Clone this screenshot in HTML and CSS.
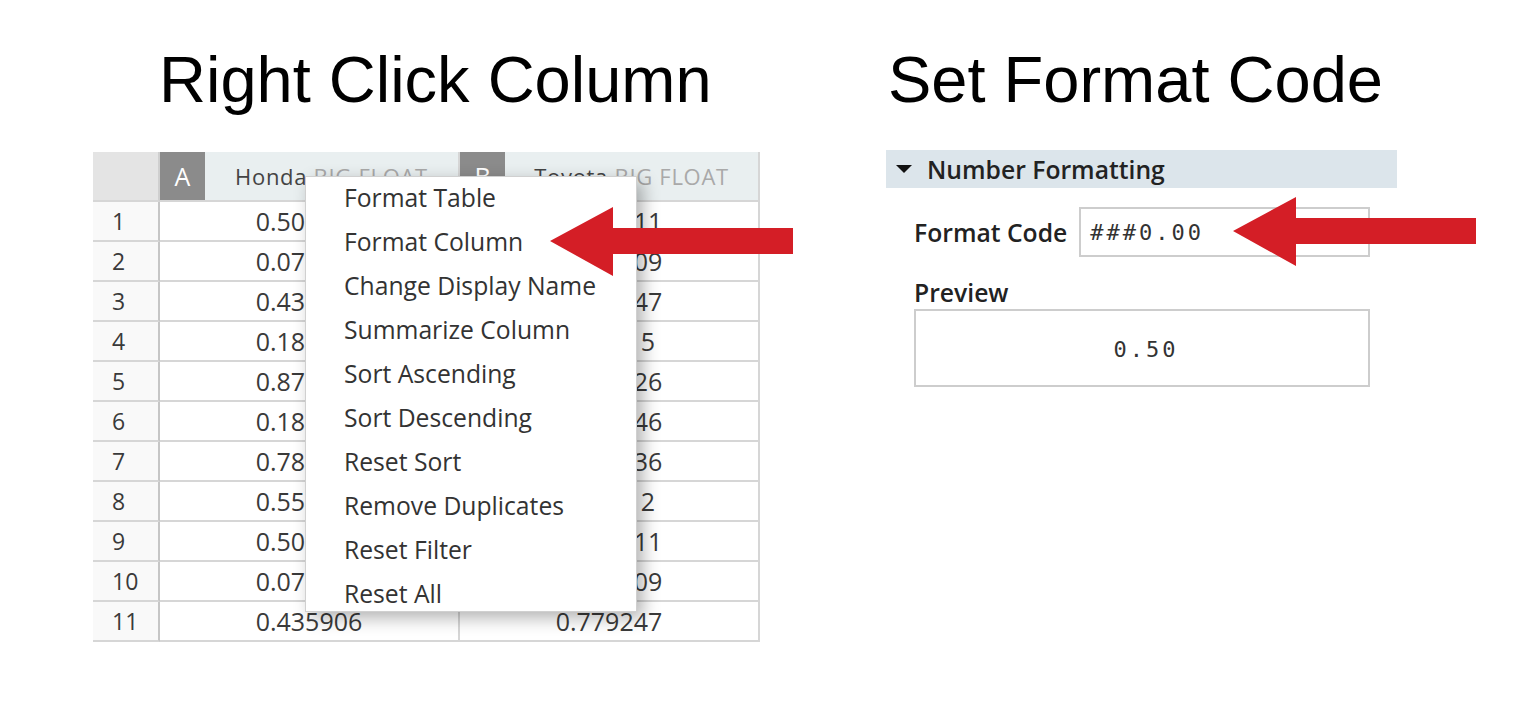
FILE: index.html
```html
<!DOCTYPE html>
<html lang="en">
<head>
<meta charset="utf-8">
<title>Right Click Column / Set Format Code</title>
<link rel="stylesheet" href="styles.css">
</head>
<body>
<main class="page">
  <section class="left">
    <h1 class="title">Right Click Column</h1>
    <div class="sheet">
      <div class="grid">
        <div class="cell corner"></div>
        <div class="cell colh"><span class="badge">A</span><span class="colname">Honda <span class="type">BIG FLOAT</span></span></div>
        <div class="cell colh"><span class="badge">B</span><span class="colname">Toyota <span class="type">BIG FLOAT</span></span></div>

        <div class="cell rn">1</div><div class="cell val">0.501623</div><div class="cell val">0.322411</div>
        <div class="cell rn">2</div><div class="cell val">0.071482</div><div class="cell val">0.916509</div>
        <div class="cell rn">3</div><div class="cell val">0.435906</div><div class="cell val">0.779247</div>
        <div class="cell rn">4</div><div class="cell val">0.183750</div><div class="cell val">0.84315</div>
        <div class="cell rn">5</div><div class="cell val">0.872214</div><div class="cell val">0.290826</div>
        <div class="cell rn">6</div><div class="cell val">0.186329</div><div class="cell val">0.512346</div>
        <div class="cell rn">7</div><div class="cell val">0.784015</div><div class="cell val">0.847436</div>
        <div class="cell rn">8</div><div class="cell val">0.553908</div><div class="cell val">0.39612</div>
        <div class="cell rn">9</div><div class="cell val">0.501623</div><div class="cell val">0.322411</div>
        <div class="cell rn">10</div><div class="cell val">0.071482</div><div class="cell val">0.916509</div>
        <div class="cell rn">11</div><div class="cell val">0.435906</div><div class="cell val">0.779247</div>
      </div>

      <ul class="menu">
        <li>Format Table</li>
        <li>Format Column</li>
        <li>Change Display Name</li>
        <li>Summarize Column</li>
        <li>Sort Ascending</li>
        <li>Sort Descending</li>
        <li>Reset Sort</li>
        <li>Remove Duplicates</li>
        <li>Reset Filter</li>
        <li>Reset All</li>
      </ul>

      <svg class="arrow arrow-left" width="243" height="69" viewBox="0 0 243 69" aria-hidden="true">
        <polygon points="0,34 63,0 63,21 243,21 243,47 63,47 63,69" fill="#d41e26"/>
      </svg>
    </div>
  </section>

  <section class="right">
    <h1 class="title">Set Format Code</h1>
    <div class="panel">
      <div class="panel-head"><span class="tri"></span>Number Formatting</div>
      <div class="field">
        <span class="label">Format Code</span>
        <div class="input">###0.00</div>
      </div>
      <div class="label preview-label">Preview</div>
      <div class="preview">0.50</div>

      <svg class="arrow arrow-right" width="243" height="69" viewBox="0 0 243 69" aria-hidden="true">
        <polygon points="0,34 63,0 63,21 243,21 243,47 63,47 63,69" fill="#d41e26"/>
      </svg>
    </div>
  </section>
</main>
</body>
</html>
```
FILE: styles.css
```css
body {
  margin: 0;
  background: #ffffff;
  font-family: "Open Sans", "Noto Sans", sans-serif;
}

.page {
  display: flex;
  padding-left: 93px;
}

.left {
  width: 700px;
  flex: none;
}

.right {
  margin-left: 93px;
  width: 600px;
  flex: none;
}

.title {
  font-family: "Liberation Sans", Arial, sans-serif;
  font-weight: 400;
  font-size: 65px;
  line-height: 65px;
  color: #000;
  margin: 47px 0 40px 66px;
  white-space: nowrap;
}

.right .title {
  margin: 47px 0 38px 2px;
}

/* ---------- spreadsheet ---------- */
.sheet {
  position: relative;
  width: 667px;
}

.grid {
  display: grid;
  grid-template-columns: 67px 300px 300px;
  grid-template-rows: 50px repeat(11, 40px);
}

.cell {
  box-sizing: border-box;
  border-right: 2px solid #d6d6d6;
  border-bottom: 2px solid #d6d6d6;
  display: flex;
  align-items: center;
  justify-content: center;
  color: #3a3a3a;
  font-size: 25px;
  overflow: hidden;
  white-space: nowrap;
}

.corner {
  background: #e4e4e4;
  border-right-color: #cfcfcf;
}

.colh {
  background: #e9eff0;
  justify-content: flex-start;
}

.badge {
  flex: none;
  width: 45px;
  height: 48px;
  background: #8b8b8b;
  color: #ffffff;
  display: flex;
  align-items: center;
  justify-content: center;
  font-size: 25px;
}

.colname {
  flex: 1;
  text-align: center;
  font-size: 22px;
  letter-spacing: 0.7px;
  color: #444;
}

.colname .type {
  color: #a9a9a9;
}

.rn {
  justify-content: flex-start;
  padding-left: 19px;
  background: #f9f9f9;
  border-right-color: #c6c6c6;
  font-size: 23px;
}

/* ---------- context menu ---------- */
.menu {
  position: absolute;
  left: 212px;
  top: 24px;
  width: 332px;
  height: 436px;
  box-sizing: border-box;
  margin: 0;
  padding: 0;
  list-style: none;
  background: #ffffff;
  border: 1px solid #d0d0d0;
  box-shadow: 6px 6px 16px rgba(0, 0, 0, 0.3);
  overflow: hidden;
}

.menu li {
  height: 44px;
  line-height: 41px;
  padding-left: 38px;
  font-size: 24.7px;
  color: #333;
  white-space: nowrap;
}

/* ---------- arrows ---------- */
.arrow {
  position: absolute;
  display: block;
}

.arrow-left {
  left: 457px;
  top: 55px;
}

.arrow-right {
  left: 347px;
  top: 47px;
}

/* ---------- format panel ---------- */
.panel {
  position: relative;
  width: 511px;
}

.panel-head {
  height: 38px;
  background: #dce5eb;
  display: flex;
  align-items: center;
  padding-left: 10px;
  font-weight: 600;
  font-size: 24.7px;
  color: #222;
}

.tri {
  width: 0;
  height: 0;
  border-left: 8px solid transparent;
  border-right: 8px solid transparent;
  border-top: 8px solid #111;
  margin-right: 15px;
}

.field {
  display: flex;
  align-items: center;
  gap: 12px;
  margin: 19px 0 0 28px;
}

.label {
  font-weight: 600;
  font-size: 24.7px;
  color: #222;
}

.input {
  width: 291px;
  height: 50px;
  box-sizing: border-box;
  border: 2px solid #cdcdcd;
  padding-left: 9px;
  display: flex;
  align-items: center;
  font-family: "DejaVu Sans Mono", monospace;
  font-size: 22px;
  letter-spacing: 3px;
  color: #333;
}

.preview-label {
  margin: 22px 0 0 28px;
  line-height: 28px;
}

.preview {
  margin: 2px 0 0 28px;
  width: 456px;
  height: 78px;
  box-sizing: border-box;
  border: 2px solid #cdcdcd;
  padding-left: 8px;
  padding-top: 2px;
  display: flex;
  align-items: center;
  justify-content: center;
  font-family: "DejaVu Sans Mono", monospace;
  font-size: 22px;
  letter-spacing: 3px;
  color: #333;
}
```
